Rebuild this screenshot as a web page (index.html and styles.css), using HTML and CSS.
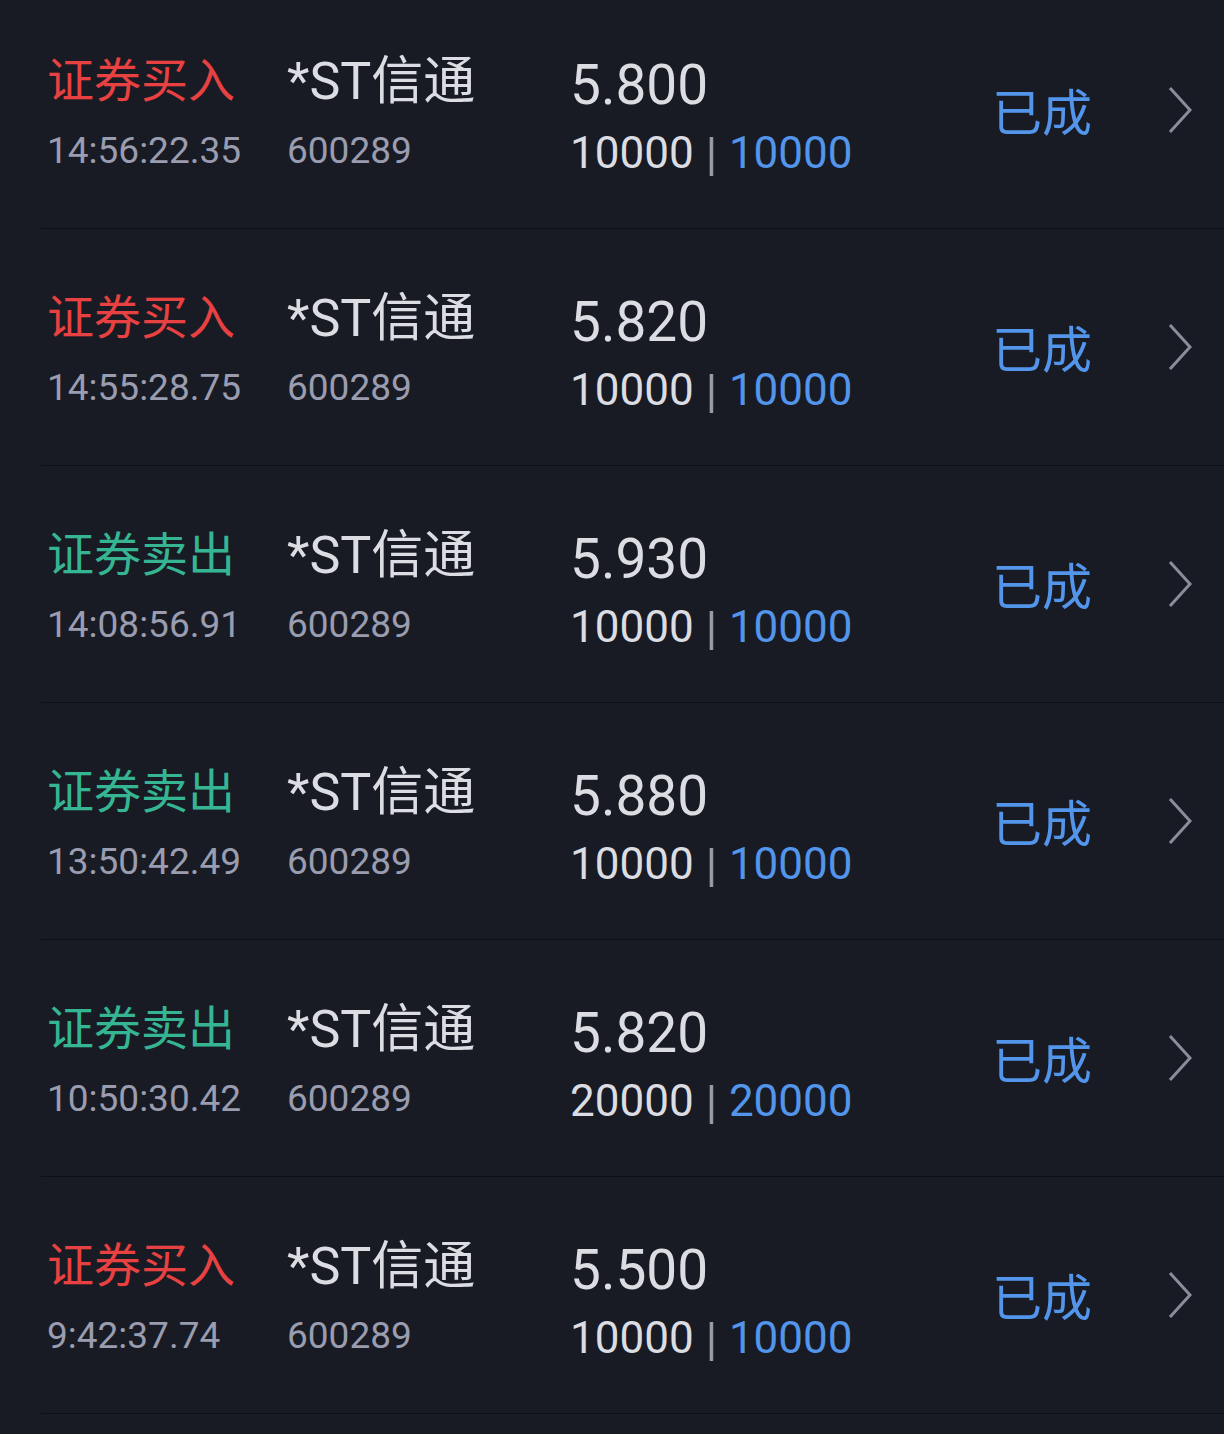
FILE: index.html
```html
<!DOCTYPE html>
<html>
    <head>
        <title>当日委托</title>
        <meta charset="utf-8">
        <link rel="stylesheet" href="styles.css">
    </head>

    <body>
        <div id="orders">
            <div class="order">
                <div class="col side">
                    <div class="top buy">证券买入</div>
                    <div class="bottom">14:56:22.35</div>
                </div>
                <div class="col stock">
                    <div class="top">*ST信通</div>
                    <div class="bottom">600289</div>
                </div>
                <div class="col deal">
                    <div class="top">5.800</div>
                    <div class="bottom">10000<span class="bar">|</span><span class="done">10000</span></div>
                </div>
                <div class="status">已成</div>
                <svg class="arrow" width="24" height="48" viewBox="0 0 24 48"><polyline points="2,2 22,24 2,46" /></svg>
            </div>
            <div class="order">
                <div class="col side">
                    <div class="top buy">证券买入</div>
                    <div class="bottom">14:55:28.75</div>
                </div>
                <div class="col stock">
                    <div class="top">*ST信通</div>
                    <div class="bottom">600289</div>
                </div>
                <div class="col deal">
                    <div class="top">5.820</div>
                    <div class="bottom">10000<span class="bar">|</span><span class="done">10000</span></div>
                </div>
                <div class="status">已成</div>
                <svg class="arrow" width="24" height="48" viewBox="0 0 24 48"><polyline points="2,2 22,24 2,46" /></svg>
            </div>
            <div class="order">
                <div class="col side">
                    <div class="top sell">证券卖出</div>
                    <div class="bottom">14:08:56.91</div>
                </div>
                <div class="col stock">
                    <div class="top">*ST信通</div>
                    <div class="bottom">600289</div>
                </div>
                <div class="col deal">
                    <div class="top">5.930</div>
                    <div class="bottom">10000<span class="bar">|</span><span class="done">10000</span></div>
                </div>
                <div class="status">已成</div>
                <svg class="arrow" width="24" height="48" viewBox="0 0 24 48"><polyline points="2,2 22,24 2,46" /></svg>
            </div>
            <div class="order">
                <div class="col side">
                    <div class="top sell">证券卖出</div>
                    <div class="bottom">13:50:42.49</div>
                </div>
                <div class="col stock">
                    <div class="top">*ST信通</div>
                    <div class="bottom">600289</div>
                </div>
                <div class="col deal">
                    <div class="top">5.880</div>
                    <div class="bottom">10000<span class="bar">|</span><span class="done">10000</span></div>
                </div>
                <div class="status">已成</div>
                <svg class="arrow" width="24" height="48" viewBox="0 0 24 48"><polyline points="2,2 22,24 2,46" /></svg>
            </div>
            <div class="order">
                <div class="col side">
                    <div class="top sell">证券卖出</div>
                    <div class="bottom">10:50:30.42</div>
                </div>
                <div class="col stock">
                    <div class="top">*ST信通</div>
                    <div class="bottom">600289</div>
                </div>
                <div class="col deal">
                    <div class="top">5.820</div>
                    <div class="bottom">20000<span class="bar">|</span><span class="done">20000</span></div>
                </div>
                <div class="status">已成</div>
                <svg class="arrow" width="24" height="48" viewBox="0 0 24 48"><polyline points="2,2 22,24 2,46" /></svg>
            </div>
            <div class="order">
                <div class="col side">
                    <div class="top buy">证券买入</div>
                    <div class="bottom">9:42:37.74</div>
                </div>
                <div class="col stock">
                    <div class="top">*ST信通</div>
                    <div class="bottom">600289</div>
                </div>
                <div class="col deal">
                    <div class="top">5.500</div>
                    <div class="bottom">10000<span class="bar">|</span><span class="done">10000</span></div>
                </div>
                <div class="status">已成</div>
                <svg class="arrow" width="24" height="48" viewBox="0 0 24 48"><polyline points="2,2 22,24 2,46" /></svg>
            </div>
        </div>
    </body>
</html>
```

FILE: styles.css
```css
body {
    margin: 0;
    background-color: #181b24;
    font-family: Roboto, "Noto Sans CJK SC", sans-serif;
    color: #dcdde3;
    overflow: hidden;
}

#orders {
    margin-top: -8px;
}

.order {
    display: grid;
    grid-template-columns: 240px 283px 1fr auto auto;
    align-items: center;
    height: 236px;
    margin-left: 41px;
    padding-left: 6px;
    padding-right: 32px;
    border-bottom: 1px solid #0e1016;
}

.col {
    align-self: start;
    white-space: nowrap;
}

/* type + time */
.side {
    padding-top: 54px;
}

.side .top {
    height: 70px;
    line-height: 70px;
    font-size: 47px;
}

.buy {
    color: #e84141;
}

.sell {
    color: #35b592;
}

.side .bottom,
.stock .bottom {
    height: 69px;
    line-height: 69px;
    font-size: 37px;
    color: #9a9caf;
}

/* name + code */
.stock {
    padding-top: 56px;
}

.stock .top {
    height: 68px;
    line-height: 68px;
    font-size: 52px;
    color: #dcdde3;
}

/* price + volume */
.deal {
    padding-top: 60px;
}

.deal .top {
    height: 66px;
    line-height: 66px;
    font-size: 55px;
}

.deal .bottom {
    height: 69px;
    line-height: 69px;
    font-size: 44px;
}

.bar {
    color: #9a9caf;
    margin: 0 12px 0 12px;
    font-size: 46px;
    position: relative;
    top: 2px;
}

.done {
    color: #5295ea;
}

.status {
    font-family: "Noto Sans CJK SC", sans-serif;
    font-size: 50px;
    color: #5295ea;
    margin-right: 76px;
    margin-top: -3px;
}

.arrow {
    display: block;
}

.arrow polyline {
    fill: none;
    stroke: #8a8e9b;
    stroke-width: 3;
}
```
